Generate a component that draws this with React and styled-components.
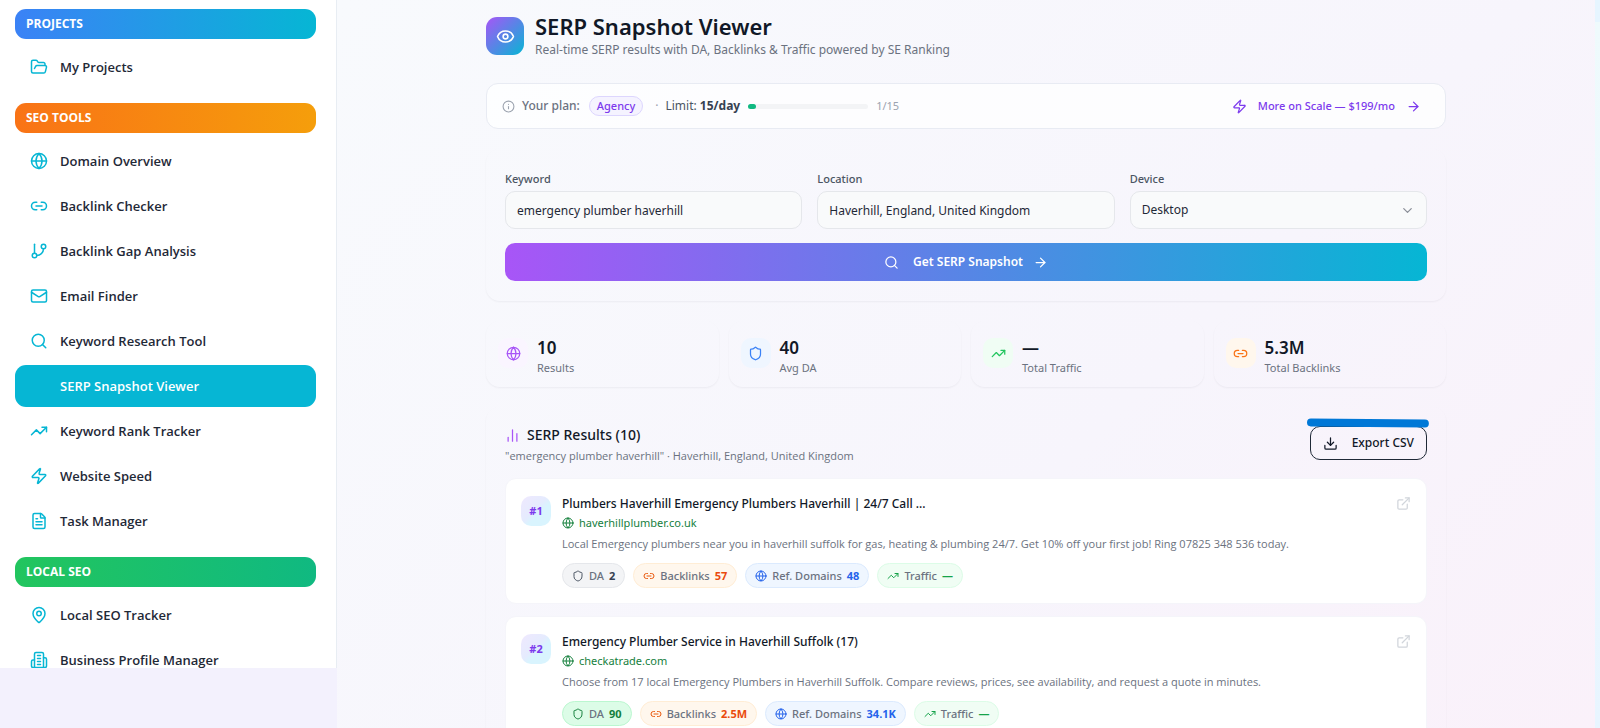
import React, { useState } from "react";
import styled, { createGlobalStyle, css } from "styled-components";
import {
  ArrowRight,
  ChartNoAxesColumn,
  ChevronDown,
  Download,
  ExternalLink,
  Eye,
  FileText,
  FolderOpen,
  GitBranch,
  Globe,
  Info,
  Link2,
  Mail,
  MapPin,
  Search,
  Shield,
  TrendingUp,
  Zap,
} from "lucide-react";

const Building = ({ size }) => (
  <svg
    width={size}
    height={size}
    viewBox="0 0 24 24"
    fill="none"
    stroke="currentColor"
    strokeWidth="2"
    strokeLinecap="round"
    strokeLinejoin="round"
  >
    <path d="M6 22V4a2 2 0 0 1 2-2h8a2 2 0 0 1 2 2v18Z" />
    <path d="M6 12H4a2 2 0 0 0-2 2v6a2 2 0 0 0 2 2h2" />
    <path d="M18 9h2a2 2 0 0 1 2 2v9a2 2 0 0 1-2 2h-2" />
    <path d="M10 6h4M10 10h4M10 14h4M10 18h4" />
  </svg>
);

const menu = [
  {
    title: "PROJECTS",
    from: "#3b82f6",
    to: "#06b6d4",
    items: [{ name: "My Projects", icon: FolderOpen }],
  },
  {
    title: "SEO TOOLS",
    from: "#f97316",
    to: "#f59e0b",
    items: [
      { name: "Domain Overview", icon: Globe },
      { name: "Backlink Checker", icon: Link2 },
      { name: "Backlink Gap Analysis", icon: GitBranch },
      { name: "Email Finder", icon: Mail },
      { name: "Keyword Research Tool", icon: Search },
      { name: "SERP Snapshot Viewer" },
      { name: "Keyword Rank Tracker", icon: TrendingUp },
      { name: "Website Speed", icon: Zap },
      { name: "Task Manager", icon: FileText },
    ],
  },
  {
    title: "LOCAL SEO",
    from: "#22c55e",
    to: "#10b981",
    items: [
      { name: "Local SEO Tracker", icon: MapPin },
      { name: "Business Profile Manager", icon: Building },
    ],
  },
];

const stats = [
  { value: "10", label: "Results", icon: Globe, color: "#a855f7", bg: "#faf5ff" },
  { value: "40", label: "Avg DA", icon: Shield, color: "#3b82f6", bg: "#eff6ff" },
  { value: "—", label: "Total Traffic", icon: TrendingUp, color: "#22c55e", bg: "#f0fdf4" },
  { value: "5.3M", label: "Total Backlinks", icon: Link2, color: "#f97316", bg: "#fff7ed" },
];

const tones = {
  gray: { icon: "#4b5563", value: "#374151", bg: "#f3f4f6", border: "#e5e7eb" },
  strong: { icon: "#15803d", value: "#15803d", bg: "#dcfce7", border: "#bbf7d0" },
  orange: { icon: "#ea580c", value: "#ea4a0c", bg: "#fff7ed", border: "#ffedd5" },
  blue: { icon: "#2563eb", value: "#2563eb", bg: "#eff6ff", border: "#dbeafe" },
  green: { icon: "#16a34a", value: "#16a34a", bg: "#f0fdf4", border: "#dcfce7" },
};

const results = [
  {
    rank: 1,
    title: "Plumbers Haverhill Emergency Plumbers Haverhill | 24/7 Call ...",
    domain: "haverhillplumber.co.uk",
    text: "Local Emergency plumbers near you in haverhill suffolk for gas, heating & plumbing 24/7. Get 10% off your first job! Ring 07825 348 536 today.",
    da: "2",
    daTone: "gray",
    backlinks: "57",
    domains: "48",
  },
  {
    rank: 2,
    title: "Emergency Plumber Service in Haverhill Suffolk (17)",
    domain: "checkatrade.com",
    text: "Choose from 17 local Emergency Plumbers in Haverhill Suffolk. Compare reviews, prices, see availability, and request a quote in minutes.",
    da: "90",
    daTone: "strong",
    backlinks: "2.5M",
    domains: "34.1K",
  },
];

const Chip = ({ icon: Icon, label, value, tone }) => (
  <ChipBox $tone={tones[tone]}>
    <Icon size={12} />
    {label}
    <b>{value}</b>
  </ChipBox>
);

const Sidebar = ({ active, setActive }) => (
  <SidebarContainer>
    {menu.map((group) => (
      <MenuGroup key={group.title}>
        <GroupTitle $from={group.from} $to={group.to}>
          {group.title}
        </GroupTitle>
        <MenuList>
          {group.items.map(({ name, icon: Icon }) => (
            <li key={name}>
              <MenuLink
                href="#"
                $active={active === name}
                onClick={() => setActive(name)}
              >
                <IconSlot>{Icon && <Icon size={18} />}</IconSlot>
                {name}
              </MenuLink>
            </li>
          ))}
        </MenuList>
      </MenuGroup>
    ))}
  </SidebarContainer>
);

const App = () => {
  const [active, setActive] = useState("SERP Snapshot Viewer");
  const used = 1;
  const limit = 15;

  return (
    <>
      <GlobalStyle />
      <Page>
        <Sidebar active={active} setActive={setActive} />
        <Main>
          <Content>
            <PageHeader>
              <HeaderIcon>
                <Eye size={19} />
              </HeaderIcon>
              <div>
                <Title>SERP Snapshot Viewer</Title>
                <Subtitle>
                  Real-time SERP results with DA, Backlinks &amp; Traffic powered by SE Ranking
                </Subtitle>
              </div>
            </PageHeader>

            <PlanBar>
              <Info size={13} />
              <PlanLabel>Your plan:</PlanLabel>
              <PlanBadge>Agency</PlanBadge>
              <Dot>·</Dot>
              <LimitText>
                Limit: <b>15/day</b>
              </LimitText>
              <Track>
                <Fill style={{ width: `${(used / limit) * 100}%` }} />
              </Track>
              <Usage>
                {used}/{limit}
              </Usage>
              <UpgradeLink href="#">
                <Zap size={15} />
                More on Scale — $199/mo
                <ArrowRight size={15} />
              </UpgradeLink>
            </PlanBar>

            <FormCard onSubmit={(e) => e.preventDefault()}>
              <Fields>
                <Field>
                  <Label htmlFor="keyword">Keyword</Label>
                  <Input id="keyword" defaultValue="emergency plumber haverhill" />
                </Field>
                <Field>
                  <Label htmlFor="location">Location</Label>
                  <Input id="location" defaultValue="Haverhill, England, United Kingdom" />
                </Field>
                <Field>
                  <Label htmlFor="device">Device</Label>
                  <SelectWrap>
                    <Select id="device" defaultValue="Desktop">
                      <option>Desktop</option>
                      <option>Mobile</option>
                    </Select>
                    <ChevronDown size={15} />
                  </SelectWrap>
                </Field>
              </Fields>
              <SubmitButton type="submit">
                <Search size={15} />
                Get SERP Snapshot
                <ArrowRight size={15} />
              </SubmitButton>
            </FormCard>

            <Stats>
              {stats.map(({ value, label, icon: Icon, color, bg }) => (
                <StatCard key={label}>
                  <StatIcon $color={color} $bg={bg}>
                    <Icon size={15} />
                  </StatIcon>
                  <div>
                    <StatValue>{value}</StatValue>
                    <StatLabel>{label}</StatLabel>
                  </div>
                </StatCard>
              ))}
            </Stats>

            <ResultsCard>
              <ResultsHeader>
                <div>
                  <ResultsTitle>
                    <ChartNoAxesColumn size={15} />
                    SERP Results (10)
                  </ResultsTitle>
                  <ResultsQuery>
                    "emergency plumber haverhill" · Haverhill, England, United Kingdom
                  </ResultsQuery>
                </div>
                <ExportWrap>
                  <ExportButton type="button">
                    <Download size={15} />
                    Export CSV
                  </ExportButton>
                  <Marker viewBox="0 0 124 10">
                    <path d="M4 4.5L119.5 5.5" />
                  </Marker>
                </ExportWrap>
              </ResultsHeader>
              {results.map((r) => (
                <Result key={r.rank}>
                  <Rank>#{r.rank}</Rank>
                  <ResultBody>
                    <ResultTitle>{r.title}</ResultTitle>
                    <Domain href="#">
                      <Globe size={12} />
                      {r.domain}
                    </Domain>
                    <Snippet>{r.text}</Snippet>
                    <Chips>
                      <Chip icon={Shield} label="DA" value={r.da} tone={r.daTone} />
                      <Chip icon={Link2} label="Backlinks" value={r.backlinks} tone="orange" />
                      <Chip icon={Globe} label="Ref. Domains" value={r.domains} tone="blue" />
                      <Chip icon={TrendingUp} label="Traffic" value="—" tone="green" />
                    </Chips>
                  </ResultBody>
                  <OpenLink href="#" aria-label={`Open ${r.domain}`}>
                    <ExternalLink size={15} />
                  </OpenLink>
                </Result>
              ))}
            </ResultsCard>
          </Content>
        </Main>
        <ScrollStrip />
      </Page>
    </>
  );
};

export default App;

const GlobalStyle = createGlobalStyle`
  *, *::before, *::after {
    box-sizing: border-box;
  }
  body {
    margin: 0;
    overflow: hidden;
    font-family: "Noto Sans", "Open Sans", sans-serif;
    font-size: 12px;
    line-height: 20px;
    color: #111827;
    background: #f3f1fd;
  }
  h1, h2, h3, p, ul {
    margin: 0;
    padding: 0;
  }
  button, input, select {
    font: inherit;
    color: inherit;
  }
  a {
    text-decoration: none;
  }
  svg {
    flex-shrink: 0;
  }
`;

const Page = styled.div`
  display: flex;
  align-items: flex-start;
  height: 100vh;
`;

const SidebarContainer = styled.nav`
  flex: 0 0 337px;
  height: calc(100vh - 60px);
  padding: 9px 20px 0 15px;
  overflow: hidden;
  font-family: "Open Sans", "Noto Sans", sans-serif;
  background: #fff;
  border-right: 1px solid #e8edf3;
`;

const MenuGroup = styled.section`
  margin-bottom: 15px;
`;

const GroupTitle = styled.h2`
  margin-bottom: 7px;
  padding: 0 11px;
  border-radius: 11px;
  font-size: 12px;
  font-weight: 700;
  line-height: 30px;
  color: #fff;
  background: linear-gradient(90deg, ${({ $from }) => $from}, ${({ $to }) => $to});
`;

const MenuList = styled.ul`
  display: flex;
  flex-direction: column;
  gap: 3px;
  list-style: none;
`;

const MenuLink = styled.a`
  display: flex;
  align-items: center;
  gap: 12px;
  height: 42px;
  padding: 0 15px;
  border-radius: 11px;
  font-size: 13px;
  font-weight: 600;
  color: #1f2937;
  ${({ $active }) =>
    $active &&
    css`
      color: #fff;
      background: #06b6d4;
    `}
`;

const IconSlot = styled.span`
  display: flex;
  width: 18px;
  color: #06b6d4;
`;

const Main = styled.main`
  flex: 1;
  min-width: 0;
  height: 100%;
  overflow: hidden;
  background: linear-gradient(135deg, #f8fafd 0%, #f7f5fc 60%, #faf1fa 100%);
`;

const ScrollStrip = styled.div`
  flex: 0 0 5px;
  height: 100%;
  background: linear-gradient(#e6f5ff 22px, #effafc 22px, #e8f5ff);
`;

const Content = styled.div`
  display: flex;
  flex-direction: column;
  gap: 20px;
  max-width: 960px;
  margin: 0 auto;
  padding-top: 9px;
`;

const PageHeader = styled.header`
  display: flex;
  align-items: center;
  gap: 11px;
  height: 54px;
`;

const HeaderIcon = styled.div`
  display: grid;
  place-items: center;
  width: 38px;
  height: 38px;
  border-radius: 11px;
  color: #fff;
  background: linear-gradient(135deg, #a855f7, #06b6d4);
`;

const Title = styled.h1`
  font-size: 22px;
  font-weight: 600;
  line-height: 28px;
`;

const Subtitle = styled.p`
  line-height: 20px;
  color: #6b7280;
`;

const PlanBar = styled.section`
  display: flex;
  align-items: center;
  height: 46px;
  padding: 0 15px;
  border: 1px solid #e8ebf3;
  border-radius: 12px;
  color: #9ca3af;
  background: rgba(255, 255, 255, 0.75);
`;

const PlanLabel = styled.span`
  margin: 0 9px 0 7px;
  font-weight: 500;
  color: #6b7280;
`;

const PlanBadge = styled.span`
  padding: 0 7px;
  border: 1px solid #ddd6fe;
  border-radius: 10px;
  font-size: 11px;
  font-weight: 500;
  line-height: 18px;
  color: #7c3aed;
  background: #f5f3ff;
`;

const Dot = styled.span`
  margin: 0 7px 0 12px;
`;

const LimitText = styled.span`
  color: #4b5563;
  b {
    font-weight: 700;
    color: #374151;
  }
`;

const Track = styled.div`
  width: 120px;
  height: 5px;
  margin: 0 8px;
  border-radius: 3px;
  background: #f3f4f6;
`;

const Fill = styled.div`
  height: 100%;
  border-radius: 3px;
  background: #10b981;
`;

const Usage = styled.span`
  font-size: 11px;
`;

const UpgradeLink = styled.a`
  display: flex;
  align-items: center;
  gap: 11px;
  margin-left: auto;
  padding-right: 9px;
  font-size: 11px;
  font-weight: 500;
  color: #7c3aed;
`;

const softCard = css`
  border-radius: 14px;
  box-shadow: 0 1px 2px rgba(15, 23, 42, 0.05);
`;

const FormCard = styled.form`
  display: flex;
  flex-direction: column;
  gap: 14px;
  padding: 20px 19px;
  ${softCard}
`;

const Fields = styled.div`
  display: grid;
  grid-template-columns: repeat(3, 1fr);
  gap: 15px;
`;

const Field = styled.div`
  display: flex;
  flex-direction: column;
  gap: 3px;
`;

const Label = styled.label`
  font-size: 11px;
  font-weight: 500;
  line-height: 19px;
  color: #4b5563;
`;

const Input = styled.input`
  width: 100%;
  height: 38px;
  padding: 0 11px;
  border: 1px solid #e5e7eb;
  border-radius: 10px;
  background: #f9fafb;
  color: #1f2937;
`;

const SelectWrap = styled.div`
  display: grid;
  align-items: center;
  > * {
    grid-area: 1 / 1;
  }
  svg {
    justify-self: end;
    margin-right: 12px;
    color: #8b8f98;
    pointer-events: none;
  }
`;

const Select = styled(Input).attrs({ as: "select" })`
  appearance: none;
`;

const SubmitButton = styled.button`
  display: flex;
  align-items: center;
  justify-content: center;
  height: 38px;
  border: 0;
  border-radius: 10px;
  font-weight: 600;
  color: #fff;
  background: linear-gradient(90deg, #a855f7, #06b6d4);
  svg:first-child {
    margin-right: 14px;
  }
  svg:last-child {
    margin-left: 10px;
  }
`;

const Stats = styled.section`
  display: grid;
  grid-template-columns: repeat(4, 1fr);
  gap: 10px;
`;

const StatCard = styled.div`
  display: flex;
  gap: 9px;
  height: 66px;
  padding: 17px 12px 0;
  ${softCard}
`;

const StatIcon = styled.div`
  display: grid;
  place-items: center;
  width: 30px;
  height: 30px;
  border-radius: 10px;
  color: ${({ $color }) => $color};
  background: ${({ $bg }) => $bg};
`;

const StatValue = styled.div`
  font-size: 17px;
  font-weight: 600;
`;

const StatLabel = styled.div`
  font-size: 11px;
  color: #6b7280;
`;

const ResultsCard = styled.section`
  display: flex;
  flex-direction: column;
  gap: 12px;
  padding: 19px;
  ${softCard}
`;

const ResultsHeader = styled.div`
  display: flex;
  align-items: flex-start;
  justify-content: space-between;
`;

const ResultsTitle = styled.h2`
  display: flex;
  align-items: center;
  gap: 7px;
  font-size: 14px;
  font-weight: 500;
  line-height: 18px;
  svg {
    color: #a855f7;
  }
`;

const ResultsQuery = styled.p`
  margin-top: 2px;
  font-family: "Open Sans", sans-serif;
  font-size: 11px;
  line-height: 20px;
  color: #6b7280;
`;

const ExportWrap = styled.div`
  position: relative;
`;

const ExportButton = styled.button`
  display: flex;
  align-items: center;
  gap: 14px;
  height: 34px;
  padding: 0 12px;
  border: 1px solid #1f2937;
  border-radius: 10px;
  font-weight: 500;
  background: transparent;
`;

/* hand-drawn highlight above the export button */
const Marker = styled.svg`
  position: absolute;
  top: -8px;
  left: -3px;
  width: calc(100% + 5px);
  height: 10px;
  path {
    stroke: #0078d7;
    stroke-width: 8;
    stroke-linecap: round;
  }
`;

const Result = styled.article`
  display: flex;
  align-items: flex-start;
  gap: 11px;
  padding: 15px;
  border: 1px solid #f5f5fa;
  border-radius: 11px;
  background: #fff;
`;

const Rank = styled.div`
  width: 30px;
  margin-top: 2px;
  border-radius: 10px;
  font-size: 11px;
  font-weight: 700;
  line-height: 30px;
  text-align: center;
  color: #7c3aed;
  background: linear-gradient(135deg, #ede9fe 10%, #e5ebfe 45%, #d9f4fe 60%);
`;

const ResultBody = styled.div`
  flex: 1;
  min-width: 0;
`;

const ResultTitle = styled.h3`
  font-size: 12px;
  font-weight: 500;
  line-height: 19px;
`;

const Domain = styled.a`
  display: flex;
  align-items: center;
  gap: 5px;
  font-size: 11px;
  line-height: 19px;
  color: #15803d;
`;

const Snippet = styled.p`
  margin: 2px 0 10px;
  font-family: "Open Sans", sans-serif;
  font-size: 11px;
  line-height: 19px;
  color: #6b7280;
`;

const Chips = styled.div`
  display: flex;
  gap: 8px;
`;

const ChipBox = styled.span`
  display: flex;
  align-items: center;
  gap: 5px;
  height: 25px;
  padding: 0 9px;
  border: 1px solid ${({ $tone }) => $tone.border};
  border-radius: 13px;
  font-size: 11px;
  font-weight: 500;
  color: #6b7280;
  background: ${({ $tone }) => $tone.bg};
  svg {
    color: ${({ $tone }) => $tone.icon};
  }
  b {
    font-weight: 700;
    color: ${({ $tone }) => $tone.value};
  }
`;

const OpenLink = styled.a`
  display: flex;
  margin-top: 2px;
  color: #d1d5db;
`;
